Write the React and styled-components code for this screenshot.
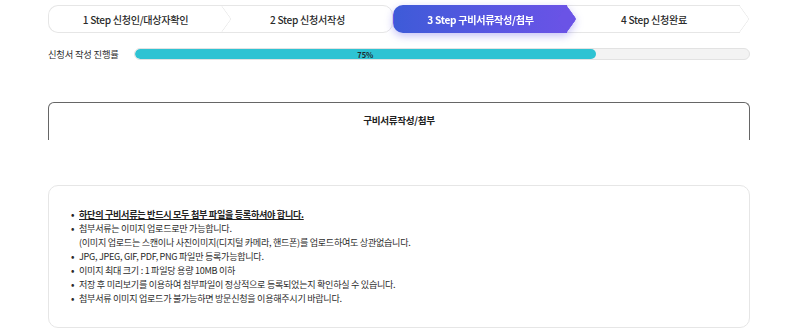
import React from 'react'
import styled, { createGlobalStyle } from 'styled-components'

const GlobalStyle = createGlobalStyle`
    body {
        margin: 0;
        background: #ffffff;
        font-family: "Noto Sans CJK KR", "Noto Sans", sans-serif;
        color: #333333;
    }
`;

const Page = styled.div`
    width: 702px;
    padding: 5px 0 0 48px;
`;

const Steps = styled.div`
    display: flex;
    height: 28px;
`;

const Step = styled.div`
    position: relative;
    box-sizing: border-box;
    width: ${p => p.$width}px;
    height: 28px;
    margin-left: ${p => p.$overlap ? -10 : 0}px;
    padding-left: ${p => p.$overlap ? 10 : 0}px;
    display: flex;
    align-items: center;
    justify-content: center;
    z-index: ${p => p.$z};
    border: 1px solid ${p => p.$active ? 'transparent' : '#e6e6e6'};
    border-right: ${p => p.$arrow ? 'none' : undefined};
    border-radius: ${p => p.$arrow ? '10px 0 0 10px' : '10px'};
    background: ${p => p.$active ? 'linear-gradient(90deg, #3e5bd8 0%, #5a56e2 60%, #6a53e6 100%)' : '#ffffff'};
    filter: ${p => p.$active ? 'drop-shadow(0 3px 4px rgba(90, 80, 230, 0.35))' : 'none'};
    font-size: 10.1px;
    font-weight: ${p => p.$active ? 700 : 500};
    letter-spacing: -0.3px;
    color: ${p => p.$active ? '#ffffff' : '#2b2b2b'};

    &::after {
        content: ${p => p.$arrow ? "''" : 'none'};
        position: absolute;
        top: 50%;
        right: 0;
        width: 19px;
        height: 19px;
        box-sizing: border-box;
        background: ${p => p.$active ? '#6a53e6' : '#ffffff'};
        border-top: 1px solid ${p => p.$active ? '#6a53e6' : '#e6e6e6'};
        border-right: 1px solid ${p => p.$active ? '#6a53e6' : '#e6e6e6'};
        border-top-right-radius: 3px;
        transform: translate(50%, -50%) scaleX(0.72) rotate(45deg);
    }
`;

const StepLabel = styled.span`
    position: relative;
    z-index: 1;
`;

const ProgressRow = styled.div`
    display: flex;
    align-items: center;
    height: 12px;
    margin-top: 15px;
`;

const ProgressLabel = styled.div`
    width: 86px;
    font-size: 9.3px;
    letter-spacing: -0.2px;
    color: #2b2b2b;
`;

const Track = styled.div`
    flex: 1;
    box-sizing: border-box;
    height: 12px;
    border: 1px solid #e2e2e2;
    border-radius: 6px;
    background: #f3f3f3;
    overflow: hidden;
`;

const Fill = styled.div`
    height: 100%;
    border-radius: 6px;
    background: #2ec3d3;
    display: flex;
    align-items: center;
    justify-content: center;
    font-size: 7.5px;
    font-weight: 700;
    color: #1f2a30;
`;

const Card = styled.div`
    margin-top: 42px;
    box-sizing: border-box;
    height: 38px;
    border: 1px solid #666666;
    border-bottom: none;
    border-radius: 6px 6px 0 0;
    padding-top: 10px;
    text-align: center;
    font-size: 9.6px;
    font-weight: 700;
    letter-spacing: -0.3px;
    color: #222222;
`;

const InfoBox = styled.div`
    margin-top: 45px;
    box-sizing: border-box;
    height: 143px;
    border: 1px solid #e6e6e6;
    border-radius: 10px;
    padding: 21px 0 0 22px;
`;

const List = styled.ul`
    margin: 0;
    padding: 0;
    list-style: none;
    font-size: 9.1px;
    line-height: 14px;
    letter-spacing: -0.3px;
    color: #2b2b2b;
`;

const Item = styled.li`
    position: relative;
    padding-left: 8px;
    font-weight: ${p => p.$strong ? 700 : 400};
    text-decoration: ${p => p.$strong ? 'underline' : 'none'};
    color: ${p => p.$strong ? '#222222' : '#2b2b2b'};

    &::before {
        content: '•';
        position: absolute;
        left: 0;
        top: 0;
        font-weight: 700;
    }
`;

const steps = [
    { label: '1 Step 신청인/대상자확인', width: 174, arrow: true, z: 4 },
    { label: '2 Step 신청서작성', width: 181, overlap: true, z: 3 },
    { label: '3 Step 구비서류작성/첨부', width: 174, arrow: true, active: true, z: 5 },
    { label: '4 Step 신청완료', width: 183, arrow: true, overlap: true, z: 1 },
];

const notes = [
    '첨부서류는 이미지 업로드로만 가능합니다.',
    'JPG, JPEG, GIF, PDF, PNG 파일만 등록가능합니다.',
    '이미지 최대 크기 : 1 파일당 용량 10MB 이하',
    '저장 후 미리보기를 이용하여 첨부파일이 정상적으로 등록되었는지 확인하실 수 있습니다.',
    '첨부서류 이미지 업로드가 불가능하면 방문신청을 이용해주시기 바랍니다.',
];

const App = () => {
    const progress = 75;
    return (
        <Page>
            <GlobalStyle />
            <Steps>
                {steps.map(s => (
                    <Step
                        key={s.label}
                        $width={s.width}
                        $arrow={s.arrow}
                        $overlap={s.overlap}
                        $active={s.active}
                        $z={s.z}
                    >
                        <StepLabel>{s.label}</StepLabel>
                    </Step>
                ))}
            </Steps>
            <ProgressRow>
                <ProgressLabel>신청서 작성 진행률</ProgressLabel>
                <Track>
                    <Fill style={{ width: `${progress}%` }}>{progress}%</Fill>
                </Track>
            </ProgressRow>
            <Card>구비서류작성/첨부</Card>
            <InfoBox>
                <List>
                    <Item $strong>하단의 구비서류는 반드시 모두 첨부 파일을 등록하셔야 합니다.</Item>
                    <Item>
                        {notes[0]}
                        <br />
                        (이미지 업로드는 스캔이나 사진이미지(디지털 카메라, 핸드폰)를 업로드하여도 상관없습니다.
                    </Item>
                    {notes.slice(1).map(n => (
                        <Item key={n}>{n}</Item>
                    ))}
                </List>
            </InfoBox>
        </Page>
    )
}

export default App
